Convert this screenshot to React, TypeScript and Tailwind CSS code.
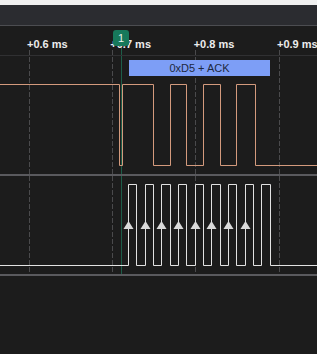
const sdaPath =
  "M0 8.5 H119.5 V89.5 H122.5 V8.5 H153.5 V89.5 H170.5 V8.5 H186.5 V89.5 H203.5 V8.5 H220.5 V89.5 H236.5 V8.5 H255.5 V89.5 H317";

const sclEdges = [128.5, 136.5, 145.5, 153.5, 161.5, 170.5, 178.5, 186.5, 195.5, 203.5, 211.5, 220.5, 228.5, 236.5, 245.5, 253.5, 261.5, 270.5];
const sclPath =
  "M0 89.5 " +
  sclEdges.map((x, i) => `H${x} V${i % 2 === 0 ? 8.5 : 89.5}`).join(" ") +
  " H317";
const arrows = sclEdges.filter((_, i) => i % 2 === 0).slice(0, 8);

const labels = ["+0.6 ms", "+0.7 ms", "+0.8 ms", "+0.9 ms"];
const gridX = [29.5, 112.5, 195.5, 279.5];

function Grid() {
  return (
    <svg className="absolute left-0 top-0" width={317} height={354}>
      {gridX.map((x) => (
        <line key={x} x1={x} y1={50} x2={x} y2={276} stroke="#4a4a4c" strokeWidth={1} strokeDasharray="5 2" />
      ))}
      <line x1={121.5} y1={46} x2={121.5} y2={276} stroke="#1d5d48" strokeWidth={1} />
    </svg>
  );
}

export default function App() {
  return (
    <div className="relative h-[354px] w-[317px] overflow-hidden bg-[#1c1c1c] font-['Liberation_Sans',Arial,sans-serif]">
      <Grid />
      <div className="relative flex flex-col">
        {/* top toolbar strip */}
        <div className="h-[5px] bg-[#f0f0f0]" />
        <div className="h-[21px] border-b border-[#4c4d51] bg-[#2b2c30]" />

        {/* time ruler */}
        <div className="flex h-[30px] items-center border-b border-[#303032] pl-[27px] pt-[8px]">
          {labels.map((l) => (
            <span key={l} className="w-[83.33px] shrink-0 whitespace-nowrap text-[11px] font-bold text-[#ececec]">
              {l}
            </span>
          ))}
        </div>

        {/* channel: SDA */}
        <div className="flex h-[118px] flex-col">
          <div className="ml-[129px] mt-[4px] flex h-[16px] w-[141px] items-center justify-center bg-[#7d9ef6] text-[11px] text-[#1d2840]">
            0xD5 + ACK
          </div>
          <svg width={317} height={98} className="block">
            <path d={sdaPath} fill="none" stroke="#d39a7d" strokeWidth={1} />
          </svg>
        </div>
        <div className="h-[2px] bg-[#5a5a5e]" />

        {/* channel: SCL */}
        <div className="h-[98px]">
          <svg width={317} height={98} className="block">
            <path d={sclPath} fill="none" stroke="#e2e2e2" strokeWidth={1} />
            {arrows.map((x) => (
              <polygon key={x} points={`${x},45 ${x - 5},53 ${x + 5},53`} fill="#dadada" />
            ))}
          </svg>
        </div>
        <div className="h-[2px] bg-[#5a5a5e]" />
      </div>

      {/* cursor marker */}
      <div className="absolute left-[113px] top-[30px] flex h-[16px] w-[16px] items-center justify-center rounded-[3px] bg-[#17795b] text-[11px] leading-none text-[#e8f2ee]">
        1
      </div>
    </div>
  );
}
